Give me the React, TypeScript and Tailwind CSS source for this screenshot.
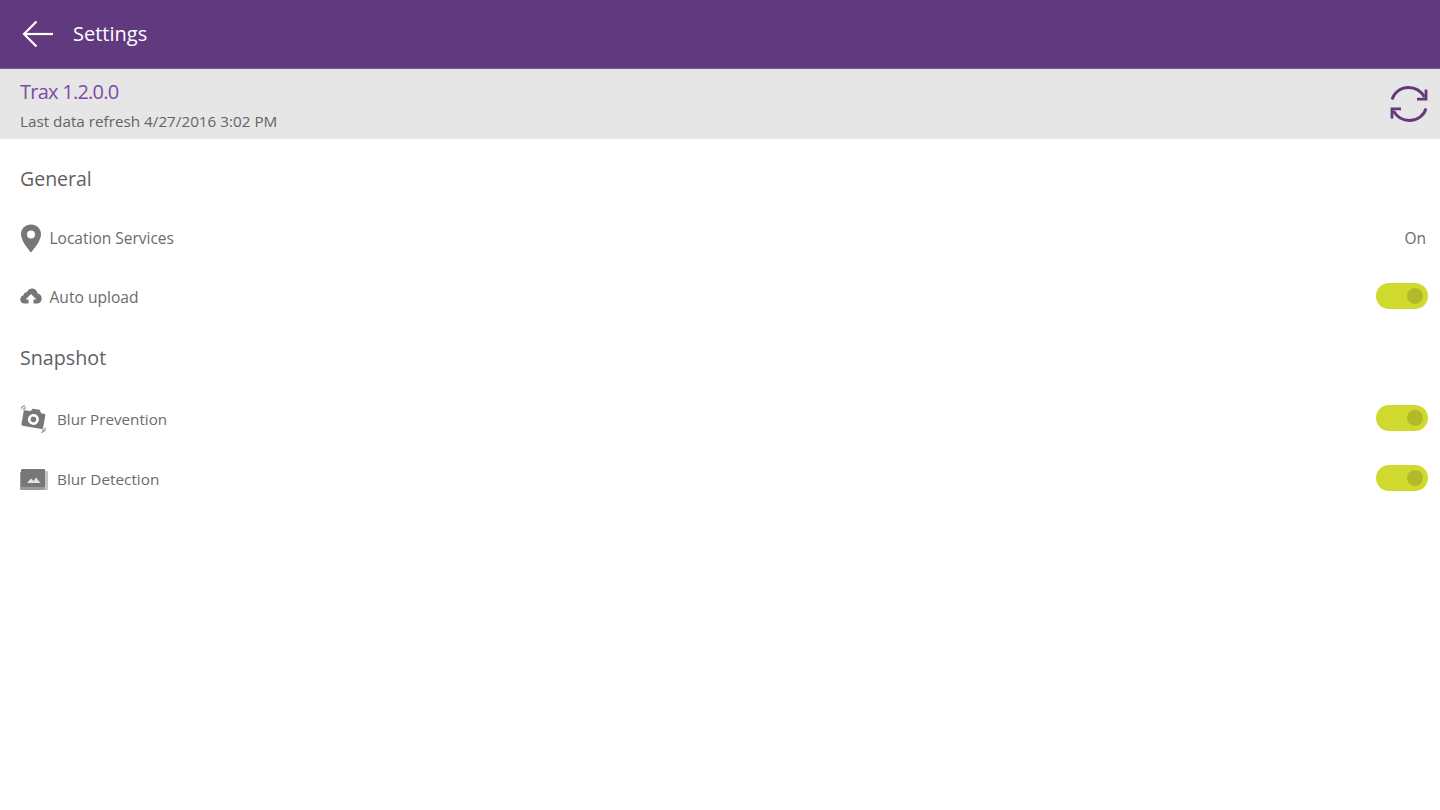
import React from "react";

const font = "font-['Open_Sans','Noto_Sans',sans-serif]";

function Toggle() {
  return (
    <div className="w-[52px] h-[26px] mb-[3px] rounded-full bg-[#d0d92e] flex items-center justify-end pr-[5px]">
      <div className="w-[16px] h-[16px] rounded-full bg-[#b3ba2a]" />
    </div>
  );
}

function BackIcon() {
  return (
    <svg width="32" height="28" viewBox="0 0 32 28" fill="none" stroke="#ffffff" strokeWidth="2.200">
      <path d="M31 14H2.500" />
      <path d="M14.500 1.500 2 14l12.500 12.500" />
    </svg>
  );
}

function SyncIcon() {
  return (
    <svg width="38" height="36" viewBox="0 0 38 36" fill="none" stroke="#61397f" strokeWidth="2.800">
      <path d="M2 13.500C4 6.500 10.500 1.500 18.500 1.500c6.500 0 12.500 3.500 16 9.500" />
      <path d="M36 3.500V13.200H27" />
      <path d="M36 22.500C34 29.500 27.500 34.500 19.500 34.500c-6.500 0-12.500-3.500-16-9.500" />
      <path d="M2 32.500V22.800H11" />
    </svg>
  );
}

function PinIcon() {
  return (
    <svg width="22" height="29" viewBox="0 0 22 29">
      <path
        fillRule="evenodd"
        fill="#777777"
        d="M11 0.500C5.200 0.500 1 4.800 1 10.300c0 6.600 7 14.600 10 18.200 3-3.600 10-11.600 10-18.200C21 4.800 16.800 0.500 11 0.500ZM11 6.400a4 4 0 1 1 0 8 4 4 0 0 1 0-8Z"
      />
    </svg>
  );
}

function CloudIcon() {
  return (
    <svg width="22" height="16" viewBox="0 0 22 16" className="mb-[2px]">
      <path
        fillRule="evenodd"
        fill="#777777"
        d="M4.500 15.500C2 15.500 0.300 13.700 0.300 11.400 0.300 9.300 1.700 7.700 3.500 7.200 3.700 5.500 5 4.200 6.800 4.200 8 1.900 9.800 0.600 12 0.600c3 0 5.200 2.200 5.600 5 2.400 0.300 4.100 2.300 4.100 4.900 0 2.800-2 5-4.700 5h-3.500v-4h3L11 6 5.500 11.500h3v4H4.500Z"
      />
    </svg>
  );
}

function CameraIcon() {
  return (
    <svg width="28" height="30" viewBox="0 0 28 30">
      <g transform="rotate(10 14 15)">
        <path
          fillRule="evenodd"
          fill="#777777"
          d="M4 8h5l2-3h7l2 3h3a1.500 1.500 0 0 1 1.500 1.500V22a1.500 1.500 0 0 1-1.500 1.500H4A1.500 1.500 0 0 1 2.500 22V9.500A1.500 1.500 0 0 1 4 8ZM13.500 10a5.500 5.500 0 1 0 0 11 5.500 5.500 0 0 0 0-11Z"
        />
        <circle cx="13.500" cy="15.500" r="2.800" fill="#777777" />
      </g>
      <path d="M1 4.500C2 3 3.500 2 5 1.500M3 6C3.800 5 5 4 6 3.500" stroke="#a8a8a8" strokeWidth="1.400" fill="none" />
      <path d="M21 28.500C23 28.200 24.500 27.200 25.500 26M22 26.500C24 26 25 25 26 24" stroke="#a8a8a8" strokeWidth="1.400" fill="none" />
    </svg>
  );
}

function PhotosIcon() {
  return (
    <svg width="28" height="21" viewBox="0 0 28 21">
      <rect x="2" y="2" width="26" height="19" rx="1" fill="#c4c4c4" />
      <rect x="0" y="3" width="25" height="18" rx="1" fill="#9a9a9a" />
      <rect x="1" y="0" width="24" height="18" rx="1" fill="#777777" />
      <path d="M7 14 11 9.500 13.500 12 16 8.500 20.500 14Z" fill="#e4e4e4" />
    </svg>
  );
}

function Row({
  icon,
  label,
  right,
  gap,
  className,
  labelClass,
}: {
  icon: React.ReactNode;
  label: string;
  right: React.ReactNode;
  gap: string;
  className: string;
  labelClass: string;
}) {
  return (
    <div className={`flex items-center justify-between pl-5 pr-[12px] ${className}`}>
      <div className={`flex items-center ${gap}`}>
        {icon}
        <span className={`text-[#6b6b6b] ${labelClass}`}>{label}</span>
      </div>
      {right}
    </div>
  );
}

export default function App() {
  return (
    <div className={`w-[1440px] h-[810px] bg-white overflow-hidden ${font}`}>
      {/* header */}
      <div className="h-[69px] bg-[#61397f] flex items-center pl-[22px] gap-[19px] border-b border-[#7a5a96]">
        <BackIcon />
        <span className="text-[20px] text-white">Settings</span>
      </div>

      {/* version strip */}
      <div className="h-[70px] bg-[#e6e6e6] flex items-center justify-between pl-5 pr-[12px]">
        <div className="flex flex-col pt-[2px]">
          <span className="text-[20px] tracking-[-0.75px] leading-[27px] text-[#7d4ba6]">Trax 1.2.0.0</span>
          <span className="text-[15.25px] leading-[24px] mt-[4px] text-[#646464]">
            Last data refresh 4/27/2016 3:02 PM
          </span>
        </div>
        <SyncIcon />
      </div>

      <div className="h-[70px] pl-5 pt-[10px] flex items-center">
        <span className="text-[19.5px] text-[#5f5f5f]">General</span>
      </div>
      <Row
        className="h-[59px]"
        gap="gap-[7.5px]"
        icon={<PinIcon />}
        label="Location Services"
        labelClass="text-[15.5px]"
        right={<span className="text-[15.5px] text-[#6b6b6b] mr-[2px]">On</span>}
      />
      <Row
        className="h-[59px]"
        gap="gap-[7.5px]"
        icon={<CloudIcon />}
        label="Auto upload"
        labelClass="text-[15.6px]"
        right={<Toggle />}
      />

      <div className="h-[62px] pl-5 flex items-center">
        <span className="text-[19.7px] text-[#5f5f5f]">Snapshot</span>
      </div>
      <Row
        className="h-[60px]"
        gap="gap-[9px]"
        icon={<CameraIcon />}
        label="Blur Prevention"
        labelClass="text-[15.2px]"
        right={<Toggle />}
      />
      <Row
        className="h-[60px]"
        gap="gap-[9px]"
        icon={<PhotosIcon />}
        label="Blur Detection"
        labelClass="text-[15.3px]"
        right={<Toggle />}
      />
    </div>
  );
}
